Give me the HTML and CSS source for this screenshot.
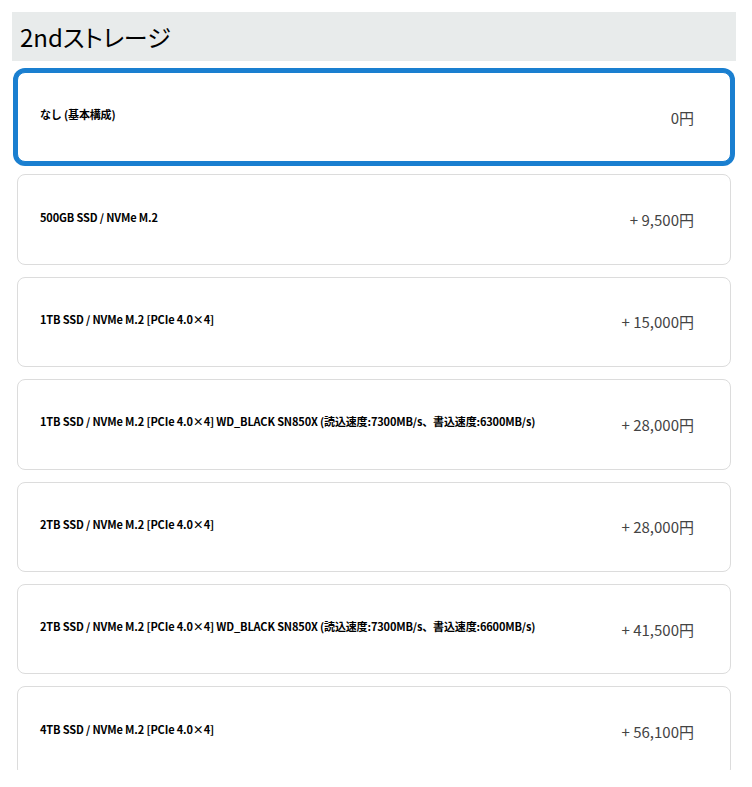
FILE: index.html
```html
<!DOCTYPE html>
<html lang="ja">
<head>
<meta charset="utf-8">
<link rel="stylesheet" href="styles.css">
</head>
<body>
<section class="panel">
  <h2 class="panel-title">2ndストレージ</h2>
  <ul class="options">
    <li class="option is-selected"><span class="label">なし (基本構成)</span><span class="price">0円</span></li>
    <li class="option"><span class="label">500GB SSD / NVMe M.2</span><span class="price">+ 9,500円</span></li>
    <li class="option"><span class="label">1TB SSD / NVMe M.2 [PCIe 4.0×4]</span><span class="price">+ 15,000円</span></li>
    <li class="option"><span class="label">1TB SSD / NVMe M.2 [PCIe 4.0×4] WD_BLACK SN850X (読込速度:7300MB/s、書込速度:6300MB/s)</span><span class="price">+ 28,000円</span></li>
    <li class="option"><span class="label">2TB SSD / NVMe M.2 [PCIe 4.0×4]</span><span class="price">+ 28,000円</span></li>
    <li class="option"><span class="label">2TB SSD / NVMe M.2 [PCIe 4.0×4] WD_BLACK SN850X (読込速度:7300MB/s、書込速度:6600MB/s)</span><span class="price">+ 41,500円</span></li>
    <li class="option"><span class="label">4TB SSD / NVMe M.2 [PCIe 4.0×4]</span><span class="price">+ 56,100円</span></li>
  </ul>
</section>
</body>
</html>
```
FILE: styles.css
```css
html, body {
  margin: 0;
  padding: 0;
  background: #fff;
}
body {
  padding: 12px 16px 0 12px;
  font-family: "Noto Sans CJK JP", "Noto Sans", sans-serif;
  color: #000;
}
.panel {
  height: 758px;
  overflow: hidden;
}
.panel-title {
  margin: 0;
  height: 49px;
  box-sizing: border-box;
  padding: 0 0 0 8px;
  display: flex;
  align-items: center;
  background: #e8ebeb;
  font-size: 24px;
  font-weight: 400;
  font-feature-settings: "palt";
  line-height: 1;
}
.options {
  list-style: none;
  margin: 0;
  padding: 11px 5px 0;
  display: flex;
  flex-direction: column;
  gap: 12px;
}
.option {
  height: 90.4px;
  box-sizing: border-box;
  border: 1px solid #dcdcdc;
  border-radius: 8px;
  display: flex;
  align-items: center;
  justify-content: space-between;
  padding: 0 36px 0 22px;
  background: #fff;
}
.option.is-selected {
  border-color: #1a7fd0;
  box-shadow: 0 0 0 4px #1a7fd0;
}
.label {
  font-size: 11px;
  font-weight: 700;
  letter-spacing: -0.15px;
  margin-top: -6px;
}
.price {
  font-size: 15px;
  color: #444;
  white-space: nowrap;
}
```
